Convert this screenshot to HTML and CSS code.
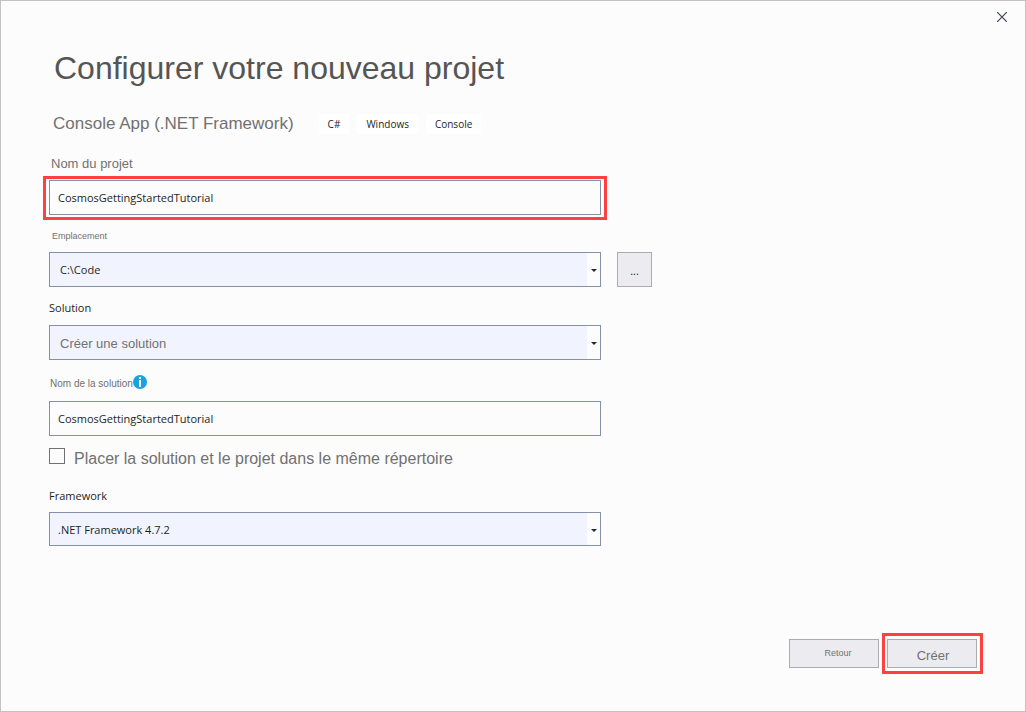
FILE: index.html
```html
<!DOCTYPE html>
<html lang="fr">
<head>
<meta charset="utf-8">
<meta name="viewport" content="width=device-width, initial-scale=1">
<title>Configurer votre nouveau projet</title>
<link rel="stylesheet" href="styles.css">
</head>
<body>
<main class="dialog">
  <div class="titlebar">
    <button class="close" type="button" aria-label="Fermer">
      <svg width="10" height="10" viewBox="0 0 10 10" aria-hidden="true"><path d="M0 0L10 10M10 0L0 10"/></svg>
    </button>
  </div>
  <h1 class="title">Configurer votre nouveau projet</h1>
  <div class="template">
    <h2 class="template-name">Console App (.NET Framework)</h2>
    <ul class="tags">
      <li class="tag">C#</li>
      <li class="tag">Windows</li>
      <li class="tag">Console</li>
    </ul>
  </div>
  <form class="form">
    <label class="label label-medium" for="project">Nom du projet</label>
    <div class="highlight highlight-field">
      <input class="control" id="project" type="text" value="CosmosGettingStartedTutorial">
    </div>

    <label class="label label-tiny" for="location">Emplacement</label>
    <div class="row">
      <div class="combo">
        <select class="control select select-indent" id="location"><option>C:\Code</option></select>
        <svg class="arrow" width="6" height="3" viewBox="0 0 6 3" aria-hidden="true"><path d="M0 0H6L3 3Z"/></svg>
      </div>
      <button class="button browse" type="button">...</button>
    </div>

    <label class="label label-dark" for="solution">Solution</label>
    <div class="row">
      <div class="combo">
        <select class="control select select-indent select-muted" id="solution"><option>Créer une solution</option></select>
        <svg class="arrow" width="6" height="3" viewBox="0 0 6 3" aria-hidden="true"><path d="M0 0H6L3 3Z"/></svg>
      </div>
    </div>

    <div class="label-info">
      <label class="label label-small" for="solution-name">Nom de la solution</label>
      <svg class="info" width="14" height="14" viewBox="0 0 14 14" aria-hidden="true"><circle cx="7" cy="7" r="7"/><path d="M6 2h2v2H6zM6 5h2V12H6z"/></svg>
    </div>
    <input class="control" id="solution-name" type="text" value="CosmosGettingStartedTutorial">

    <div class="check">
      <input class="checkbox" id="same-folder" type="checkbox">
      <label for="same-folder">Placer la solution et le projet dans le même répertoire</label>
    </div>

    <label class="label label-dark label-framework" for="framework">Framework</label>
    <div class="row">
      <div class="combo">
        <select class="control select select-short" id="framework"><option>.NET Framework 4.7.2</option></select>
        <svg class="arrow" width="6" height="3" viewBox="0 0 6 3" aria-hidden="true"><path d="M0 0H6L3 3Z"/></svg>
      </div>
    </div>
  </form>
  <footer class="actions">
    <button class="button action back" type="button">Retour</button>
    <div class="highlight highlight-action">
      <button class="button action create" type="button">Créer</button>
    </div>
  </footer>
</main>
</body>
</html>
```
FILE: styles.css
```css
* {
  box-sizing: border-box;
}

body {
  margin: 0;
  background: #fcfcfc;
  color: #1e1e1e;
  font-family: "Open Sans", "Noto Sans", sans-serif;
  font-size: 11px;
}

.dialog {
  display: flex;
  flex-direction: column;
  min-height: 100vh;
  padding: 0 42px 37px 48px;
  border: 1px solid #c3c3c3;
}

.titlebar {
  display: flex;
  justify-content: flex-end;
  height: 47px;
  margin-right: -32px;
  padding-top: 6px;
}

.close {
  display: flex;
  align-items: center;
  justify-content: center;
  width: 20px;
  height: 20px;
  margin-right: 3px;
  padding: 0;
  border: 0;
  background: none;
}

.close path {
  fill: none;
  stroke: #3d4459;
  stroke-width: 1.2;
}

.title {
  margin: 0;
  padding-left: 5px;
  color: #555;
  font: 32px/40px "Liberation Sans", Arial, sans-serif;
}

.template {
  display: flex;
  align-items: center;
  gap: 25px;
  margin-top: 25px;
  padding-left: 4px;
}

.template-name {
  margin: 0;
  padding-top: 1px;
  color: #717171;
  font: 17px/20px "Liberation Sans", Arial, sans-serif;
}

.tags {
  display: flex;
  gap: 8px;
  margin: 0;
  padding: 0;
  list-style: none;
}

.tag {
  padding: 0 9px;
  border-radius: 3px;
  background: #fff;
  font-size: 10px;
  line-height: 20px;
}

.form {
  display: flex;
  flex-direction: column;
  width: 100%;
  max-width: 552px;
  margin-top: 22px;
}

.label {
  color: #717171;
  font-family: "Liberation Sans", Arial, sans-serif;
  line-height: 16px;
  margin-bottom: 8px;
}

.label-medium {
  margin-bottom: 4px;
  padding-left: 2px;
  font-size: 13px;
}

.label-tiny {
  padding-left: 3px;
  font-size: 9px;
}

.label-small {
  padding-left: 1px;
  font-size: 10px;
}

.label-dark {
  margin: 13px 0 9px;
  color: #1e1e1e;
  font-family: "Open Sans", "Noto Sans", sans-serif;
  font-size: 11px;
}

.label-framework {
  margin: 24px 0 8px;
}

.highlight {
  border: 3px solid #fd4141;
}

.highlight-field {
  margin: 0 -6px 8px;
  padding: 1px 3px 2px;
}

.highlight-action {
  padding: 3px 3px 3px 2px;
}

.control {
  display: block;
  width: 100%;
  height: 35px;
  padding: 0 8px;
  border: 1px solid #8591a8;
  border-radius: 0;
  background: #fcfcfc;
  color: #1e1e1e;
  font: 11px "Open Sans", "Noto Sans", sans-serif;
}

.row {
  position: relative;
  display: flex;
}

.combo {
  position: relative;
  width: 100%;
}

.select {
  appearance: none;
  background: linear-gradient(to left, #fcfcfc 13px, #f1f4fe 13px);
}

.select-indent {
  padding-left: 10px;
}

.select-short {
  height: 34px;
}

.select-muted {
  padding-top: 2px;
  color: #717171;
  font: 13px "Liberation Sans", Arial, sans-serif;
}

.arrow {
  position: absolute;
  top: 17px;
  right: 4px;
  fill: #1b293e;
  pointer-events: none;
}

.button {
  padding: 0;
  border: 1px solid #acacac;
  border-radius: 0;
  background: #ececf0;
}

.browse {
  flex: none;
  width: 35px;
  height: 35px;
  margin: 0 -51px 0 16px;
  padding-top: 2px;
  color: #1e1e1e;
  font: 11px "Open Sans", "Noto Sans", sans-serif;
}

.label-info {
  display: flex;
  align-items: flex-start;
  margin: 15px 0 10px;
}

.label-info .label {
  margin: 0;
  padding-top: 1px;
  line-height: 15px;
}

.info circle {
  fill: #1ba1e2;
}

.info path {
  fill: #fff;
}

.check {
  display: flex;
  align-items: center;
  gap: 9px;
  margin-top: 12px;
  color: #717171;
  font: 16px/16px "Liberation Sans", Arial, sans-serif;
}

.check label {
  padding-top: 3px;
  margin-bottom: -3px;
}

.checkbox {
  appearance: none;
  width: 16px;
  height: 16px;
  margin: 0;
  border: 1px solid #717171;
  background: #fcfcfc;
}

.actions {
  display: flex;
  align-items: center;
  justify-content: flex-end;
  gap: 3px;
  margin-top: auto;
}

.action {
  display: block;
  width: 90px;
  height: 29px;
  color: #717171;
  font-family: "Liberation Sans", Arial, sans-serif;
}

.back {
  padding: 0 0 2px 8px;
  font-size: 9px;
}

.create {
  padding: 3px 0 0 2px;
  font-size: 13px;
}
```
